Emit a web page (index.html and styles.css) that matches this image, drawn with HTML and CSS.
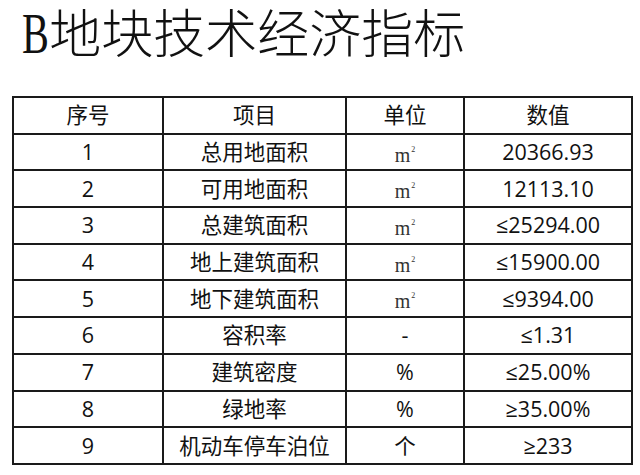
FILE: index.html
```html
<!DOCTYPE html>
<html>
<head>
<meta charset="utf-8">
<link rel="stylesheet" href="styles.css">
</head>
<body>
<div class="page">
  <h1 class="title"><span class="latin">B</span>地块技术经济指标</h1>
  <table class="grid">
    <colgroup>
      <col class="c1"><col class="c2"><col class="c3"><col class="c4">
    </colgroup>
    <thead>
      <tr><th>序号</th><th>项目</th><th>单位</th><th>数值</th></tr>
    </thead>
    <tbody>
      <tr><td>1</td><td>总用地面积</td><td class="unit">m<sup>2</sup></td><td>20366.93</td></tr>
      <tr><td>2</td><td>可用地面积</td><td class="unit">m<sup>2</sup></td><td>12113.10</td></tr>
      <tr><td>3</td><td>总建筑面积</td><td class="unit">m<sup>2</sup></td><td>≤25294.00</td></tr>
      <tr><td>4</td><td>地上建筑面积</td><td class="unit">m<sup>2</sup></td><td>≤15900.00</td></tr>
      <tr><td>5</td><td>地下建筑面积</td><td class="unit">m<sup>2</sup></td><td>≤9394.00</td></tr>
      <tr><td>6</td><td>容积率</td><td>-</td><td>≤1.31</td></tr>
      <tr><td>7</td><td>建筑密度</td><td>%</td><td>≤25.00%</td></tr>
      <tr><td>8</td><td>绿地率</td><td>%</td><td>≥35.00%</td></tr>
      <tr><td>9</td><td>机动车停车泊位</td><td>个</td><td>≥233</td></tr>
    </tbody>
  </table>
</div>
</body>
</html>
```
FILE: styles.css
```css
html, body {
  margin: 0;
  padding: 0;
  background: #ffffff;
}
.page {
  width: 640px;
  height: 475px;
  overflow: hidden;
  padding: 0 0 0 12px;
  box-sizing: border-box;
}
.title {
  margin: 0;
  padding: 4px 0 0 10px;
  height: 96px;
  box-sizing: border-box;
  font-family: "Liberation Serif", "Noto Sans CJK SC", serif;
  font-weight: 300;
  font-size: 52px;
  line-height: 60px;
  color: #111;
  letter-spacing: 0;
}
.latin {
  display: inline-block;
  font-size: 56px;
  transform: scaleX(0.72);
  transform-origin: left center;
  margin-right: -10px;
}
.grid {
  border-collapse: collapse;
  table-layout: fixed;
  width: 619px;
  font-family: "Open Sans", "Noto Sans CJK SC", sans-serif;
  font-size: 21.5px;
  color: #111;
}
.c1 { width: 150px; }
.c2 { width: 183px; }
.c3 { width: 118px; }
.c4 { width: 168px; }
.grid th, .grid td {
  border: 2px solid #1a1a1a;
  height: 36.7px;
  padding: 0;
  text-align: center;
  vertical-align: middle;
  font-weight: 400;
  line-height: 24px;
  box-sizing: border-box;
}
.grid td.unit {
  font-family: "Liberation Serif", serif;
  font-size: 20px;
  color: #333;
}
.unit sup {
  font-size: 8px;
  vertical-align: 10px;
  margin-left: 1px;
}
```
